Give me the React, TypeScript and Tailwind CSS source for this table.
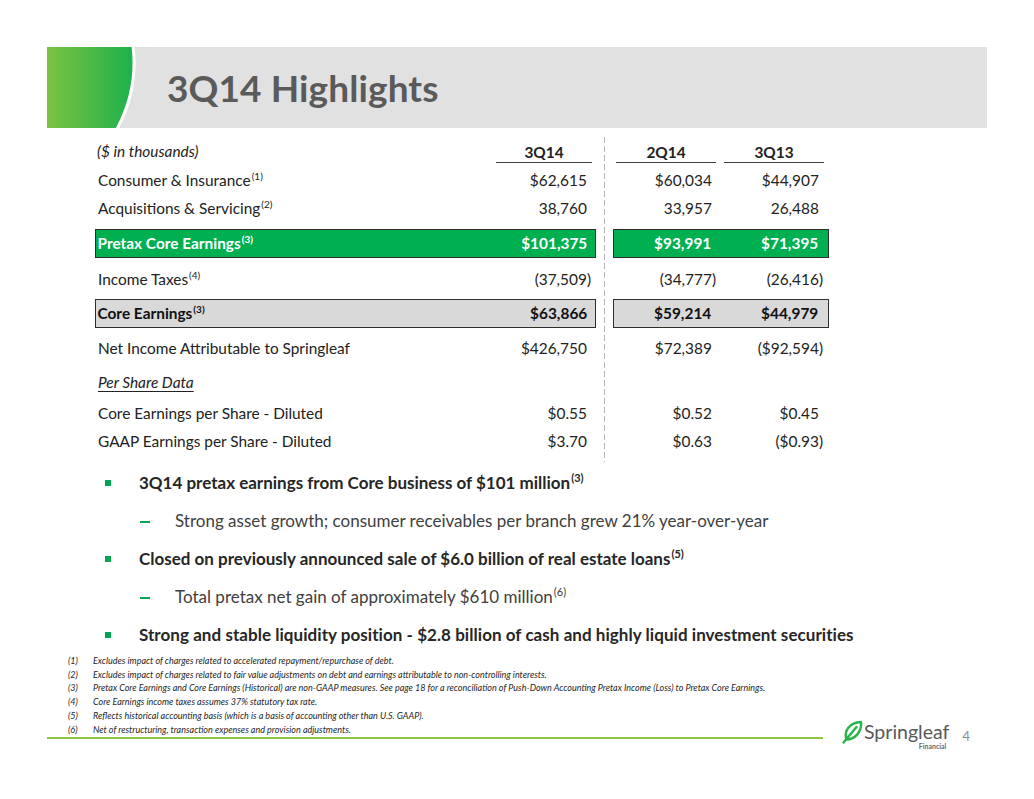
import React from "react";

type Kind = "head" | "plain" | "green" | "gray" | "section";
type Row = {
  kind: Kind;
  label: React.ReactNode;
  v: [string, string, string];
  h: string;
  mt: string;
};

const Sup = ({ children }: { children: React.ReactNode }) => (
  <sup className="text-[10px] relative top-[-6px] ml-[1px]">{children}</sup>
);

const BSup = ({ children }: { children: React.ReactNode }) => (
  <sup className="text-[11px] relative top-[-7px] ml-[1px]">{children}</sup>
);

const rows: Row[] = [
  { kind: "head", label: <i>($ in thousands)</i>, v: ["3Q14", "2Q14", "3Q13"], h: "h-[21.5px]", mt: "mt-0" },
  { kind: "plain", label: <>Consumer &amp; Insurance<Sup>(1)</Sup></>, v: ["$62,615", "$60,034", "$44,907"], h: "h-[28px]", mt: "mt-[4.5px]" },
  { kind: "plain", label: <>Acquisitions &amp; Servicing<Sup>(2)</Sup></>, v: ["38,760", "33,957", "26,488"], h: "h-[28px]", mt: "mt-0" },
  { kind: "green", label: <>Pretax Core Earnings<Sup>(3)</Sup></>, v: ["$101,375", "$93,991", "$71,395"], h: "h-[29.5px]", mt: "mt-[5.5px]" },
  { kind: "plain", label: <>Income Taxes<Sup>(4)</Sup></>, v: ["(37,509)", "(34,777)", "(26,416)"], h: "h-[28px]", mt: "mt-[8px]" },
  { kind: "gray", label: <>Core Earnings<Sup>(3)</Sup></>, v: ["$63,866", "$59,214", "$44,979"], h: "h-[29.5px]", mt: "mt-[4.5px]" },
  { kind: "plain", label: <>Net Income Attributable to Springleaf</>, v: ["$426,750", "$72,389", "($92,594)"], h: "h-[28px]", mt: "mt-[7px]" },
  { kind: "section", label: <i className="underline underline-offset-[3px] decoration-1">Per Share Data</i>, v: ["", "", ""], h: "h-[28px]", mt: "mt-[6px]" },
  { kind: "plain", label: <>Core Earnings per Share - Diluted</>, v: ["$0.55", "$0.52", "$0.45"], h: "h-[28px]", mt: "mt-[3px]" },
  { kind: "plain", label: <>GAAP Earnings per Share - Diluted</>, v: ["$3.70", "$0.63", "($0.93)"], h: "h-[28px]", mt: "mt-0" },
];

const Val = ({ v }: { v: string }) =>
  v.startsWith("(") ? <>{v}</> : <>{v}<span className="invisible">)</span></>;

function boxCls(kind: Kind) {
  if (kind === "green") return "bg-[#00b050] border-[1.5px] border-[#2e2e2e] text-white font-bold";
  if (kind === "gray") return "bg-[#d9d9d9] border-[1.5px] border-[#2e2e2e] text-[#111] font-bold";
  return "";
}

function LeftRow({ r }: { r: Row }) {
  if (r.kind === "head") {
    return (
      <div className={`flex items-center ${r.h} ${r.mt}`}>
        <div className="pl-[2px] flex-1 self-center">{r.label}</div>
        <div className="w-[96px] mr-[4px] h-full border-b-[1.5px] border-[#404040] text-center font-bold">{r.v[0]}</div>
      </div>
    );
  }
  const boxed = r.kind === "green" || r.kind === "gray";
  return (
    <div className={`flex items-center ${r.h} ${r.mt} ${boxCls(r.kind)} ${boxed ? "pl-[1.5px] pr-[3.5px]" : "pl-[3px] pr-[5px]"}`}>
      <div className="flex-1">{r.label}</div>
      <div className="text-right">{r.v[0] && <Val v={r.v[0]} />}</div>
    </div>
  );
}

function RightRow({ r }: { r: Row }) {
  if (r.kind === "head") {
    return (
      <div className={`flex items-center ${r.h} ${r.mt}`}>
        <div className="ml-[3px] w-[100px] h-full border-b-[1.5px] border-[#404040] text-center font-bold">{r.v[1]}</div>
        <div className="ml-[8px] w-[100px] h-full border-b-[1.5px] border-[#404040] text-center font-bold">{r.v[2]}</div>
      </div>
    );
  }
  const boxed = r.kind === "green" || r.kind === "gray";
  return (
    <div className={`flex items-center ${r.h} ${r.mt} ${boxCls(r.kind)}`}>
      <div className={`${boxed ? "w-[101.5px]" : "w-[103px]"} text-right`}>{r.v[1] && <Val v={r.v[1]} />}</div>
      <div className="w-[107px] text-right">{r.v[2] && <Val v={r.v[2]} />}</div>
    </div>
  );
}

function Leaf() {
  return (
    <svg width="21" height="24" viewBox="0 0 21 24" fill="none">
      <path d="M4.5 19.5 C1.5 11 7.5 2.5 19 2 C20 11 13.5 19.5 4.5 19.5 Z" stroke="#2bb34b" strokeWidth="2.4" strokeLinejoin="round" />
      <path d="M1.5 22.5 L14.5 7" stroke="#2bb34b" strokeWidth="2.4" strokeLinecap="round" />
    </svg>
  );
}

const footnotes = [
  "Excludes impact of charges related to accelerated repayment/repurchase of debt.",
  "Excludes impact of charges related to fair value adjustments on debt and earnings attributable to non-controlling interests.",
  "Pretax Core Earnings and Core Earnings (Historical) are non-GAAP measures. See page 18 for a reconciliation of Push-Down Accounting Pretax Income (Loss) to Pretax Core Earnings.",
  "Core Earnings income taxes assumes 37% statutory tax rate.",
  "Reflects historical accounting basis (which is a basis of accounting other than U.S. GAAP).",
  "Net of restructuring, transaction expenses and provision adjustments.",
];

export default function App() {
  return (
    <div className="w-[1034px] h-[799px] bg-white overflow-hidden font-['Lato','Noto_Sans',sans-serif] text-[#222]">
      {/* Header band */}
      <div className="mt-[47px] ml-[47px] w-[940px] h-[81px] bg-[#e1e1e1] flex items-center">
        <svg width="95" height="81" viewBox="0 0 95 81" className="shrink-0">
          <defs>
            <linearGradient id="hg" x1="0" x2="1" y1="0" y2="0">
              <stop offset="0" stopColor="#7dc242" />
              <stop offset="1" stopColor="#1bb14c" />
            </linearGradient>
          </defs>
          <path d="M0 0 H86 C89.5 28 84 56 70 81 H0 Z" fill="url(#hg)" />
          <path d="M86 -1 C89.5 28 84 56 70 82" stroke="#ffffff" strokeWidth="3" fill="none" />
        </svg>
        <div className="ml-[25px] text-[37px] font-bold text-[#5a5a5a] leading-none tracking-[0.1px]">3Q14 Highlights</div>
      </div>

      {/* Table */}
      <div className="mt-[9px] ml-[95px] flex text-[15.4px]">
        <div className="w-[501px] pt-[4px] pb-[6px]">
          {rows.map((r, i) => (
            <LeftRow key={i} r={r} />
          ))}
        </div>
        <div className="w-[17px] flex justify-center">
          <div className="w-[1.5px] h-full bg-[repeating-linear-gradient(to_bottom,#b5b5b5_0px,#b5b5b5_6px,transparent_6px,transparent_9px)]" />
        </div>
        <div className="w-[216px] pt-[4px] pb-[6px]">
          {rows.map((r, i) => (
            <RightRow key={i} r={r} />
          ))}
        </div>
      </div>

      {/* Bullets */}
      <div className="mt-[2px] text-[17px]">
        <div className="h-[38px] flex items-center pl-[105px]">
          <div className="w-[6px] h-[6px] bg-[#00a651]" />
          <div className="ml-[28px] font-bold text-[#262626]">
            3Q14 pretax earnings from Core business of $101 million<BSup>(3)</BSup>
          </div>
        </div>
        <div className="h-[38px] flex items-center pl-[140px]">
          <div className="w-[10px] h-[2px] bg-[#00a651] mt-[2px]" />
          <div className="ml-[25px] text-[#404040]">
            Strong asset growth; consumer receivables per branch grew 21% year-over-year
          </div>
        </div>
        <div className="h-[38px] flex items-center pl-[105px]">
          <div className="w-[6px] h-[6px] bg-[#00a651]" />
          <div className="ml-[28px] font-bold text-[#262626]">
            Closed on previously announced sale of $6.0 billion of real estate loans<BSup>(5)</BSup>
          </div>
        </div>
        <div className="h-[38px] flex items-center pl-[140px]">
          <div className="w-[10px] h-[2px] bg-[#00a651] mt-[2px]" />
          <div className="ml-[25px] text-[#404040]">
            Total pretax net gain of approximately $610 million<BSup>(6)</BSup>
          </div>
        </div>
        <div className="h-[38px] flex items-center pl-[105px]">
          <div className="w-[6px] h-[6px] bg-[#00a651]" />
          <div className="ml-[28px] font-bold text-[#262626] tracking-[0.05px]">
            Strong and stable liquidity position - $2.8 billion of cash and highly liquid investment securities
          </div>
        </div>
      </div>

      {/* Footer: footnotes + line + logo */}
      <div className="flex items-end">
        <div className="ml-[47px] w-[776px] pb-[14px]">
          <div className="pl-[21px] text-[9px] italic text-[#262626]">
            {footnotes.map((f, i) => (
              <div key={i} className="flex h-[13.7px] items-center">
                <div className="w-[25px] shrink-0">({i + 1})</div>
                <div className="whitespace-nowrap">{f}</div>
              </div>
            ))}
          </div>
          <div className="mt-[1px] h-[1.5px] bg-[#8dc63f]" />
        </div>
        <div className="ml-[19px] flex items-start">
          <div className="flex flex-col">
            <div className="flex items-end">
              <Leaf />
              <div className="text-[19.5px] leading-none text-[#58595b] ml-[1px] mb-[2px]">Springleaf</div>
            </div>
            <div className="self-end mr-[3px] text-[7px] leading-none font-bold text-[#6b6b6b] mt-[-1px] mb-[3px]">Financial</div>
          </div>
          <div className="ml-[13px] mt-[7px] text-[13px] text-[#8c8c8c]">4</div>
        </div>
      </div>
    </div>
  );
}
